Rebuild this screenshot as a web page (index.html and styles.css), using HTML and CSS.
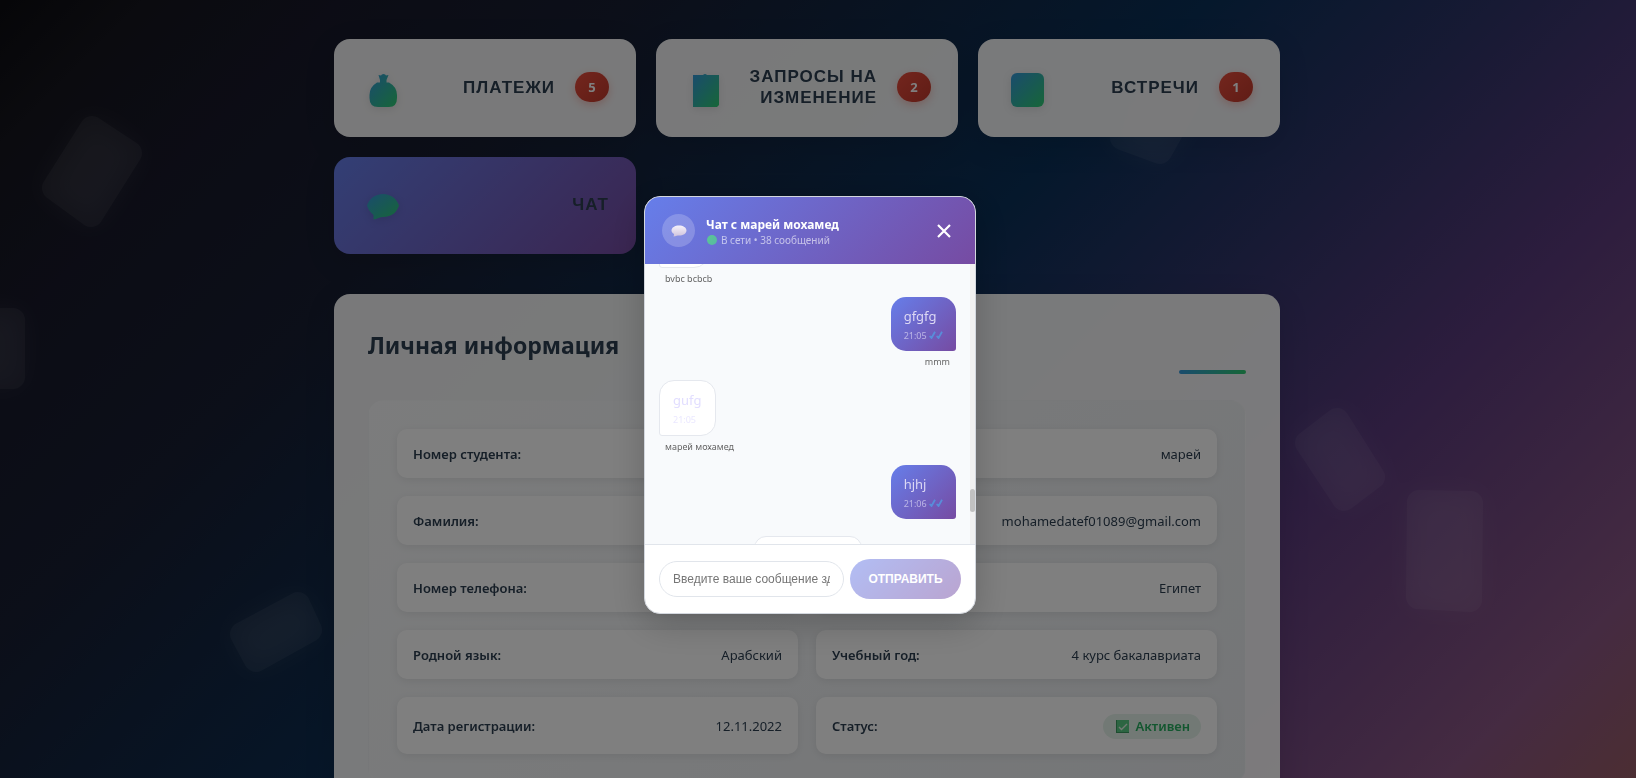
FILE: index.html
```html
<!DOCTYPE html>
<html lang="ru">

<head>
  <meta charset="UTF-8">
  <meta name="viewport" content="width=device-width, initial-scale=1.0">
  <title>Личный кабинет</title>
  <link rel="stylesheet" href="styles.css">
</head>

<body>
  <svg class="shapes" viewBox="0 0 1636 778" preserveAspectRatio="xMidYMid slice" aria-hidden="true">
    <defs>
      <filter id="glow" x="-50%" y="-50%" width="200%" height="200%">
        <feGaussianBlur stdDeviation="14" />
      </filter>
      <g id="cubes">
        <path d="M92 128 130 153 91 215 54 188z" />
        <path d="M-60 320H13V377H-60z" />
        <path d="M298 604 310 630 256 660 242 634z" />
        <path d="M1337 420 1373 477 1344 499 1307 443z" />
        <path d="M1419 502 1471 503 1470 600 1418 597z" />
        <path d="M1130 72 1188 102 1160 152 1122 138z" />
      </g>
    </defs>
    <use class="shapes-glow" href="#cubes" filter="url(#glow)" />
    <use class="shapes-body" href="#cubes" />
  </svg>

  <svg class="defs" aria-hidden="true">
    <linearGradient id="brand" x1="0" y1="0" x2="1" y2="1">
      <stop offset="0" stop-color="#3498db" />
      <stop offset="1" stop-color="#2ecc71" />
    </linearGradient>
  </svg>

  <div class="page">
    <nav class="tabs">
      <a class="tab" href="#payments">
        <svg class="tab-icon" viewBox="0 0 34 34">
          <path fill="url(#brand)" d="M11.500 2 14 2.500Q14.500 1 16.500 1T19 2.500L21.500 2 19.500 7V9.500H22Q30 14 30 22V25Q30 34 22 34H11Q2.500 34 2.500 25V22Q2.500 14 10 9.500H13V7z" />
        </svg>
        <span class="tab-title">ПЛАТЕЖИ</span>
        <span class="tab-badge">5</span>
      </a>
      <a class="tab" href="#requests">
        <svg class="tab-icon" viewBox="0 0 34 34">
          <path fill="url(#brand)" d="M4 2H14Q16 0 18 2H30V32L28 34H4z" />
        </svg>
        <span class="tab-title">ЗАПРОСЫ НА ИЗМЕНЕНИЕ</span>
        <span class="tab-badge">2</span>
      </a>
      <a class="tab" href="#meetings">
        <svg class="tab-icon" viewBox="0 0 34 34">
          <rect fill="url(#brand)" width="33" height="34" rx="6" />
        </svg>
        <span class="tab-title">ВСТРЕЧИ</span>
        <span class="tab-badge">1</span>
      </a>
      <a class="tab tab-chat" href="#chat">
        <svg class="tab-icon" viewBox="0 0 34 34">
          <path fill="url(#brand)" d="M16 3C24 3 30 8 32 14.500 30 21 25 26 16 26 13 26 10 28 6.500 28.500V24C3 21 1 18 0 14.500 2 8 8 3 16 3z" />
        </svg>
        <span class="tab-title">ЧАТ</span>
      </a>
    </nav>

    <section class="profile">
      <h2 class="profile-title">Личная информация</h2>
      <dl class="info">
        <div class="info-row">
          <dt>Номер студента:</dt>
          <dd></dd>
        </div>
        <div class="info-row">
          <dt></dt>
          <dd>марей</dd>
        </div>
        <div class="info-row">
          <dt>Фамилия:</dt>
          <dd></dd>
        </div>
        <div class="info-row">
          <dt></dt>
          <dd>mohamedatef01089@gmail.com</dd>
        </div>
        <div class="info-row">
          <dt>Номер телефона:</dt>
          <dd></dd>
        </div>
        <div class="info-row">
          <dt></dt>
          <dd>Египет</dd>
        </div>
        <div class="info-row">
          <dt>Родной язык:</dt>
          <dd>Арабский</dd>
        </div>
        <div class="info-row">
          <dt>Учебный год:</dt>
          <dd>4 курс бакалавриата</dd>
        </div>
        <div class="info-row">
          <dt>Дата регистрации:</dt>
          <dd>12.11.2022</dd>
        </div>
        <div class="info-row">
          <dt>Статус:</dt>
          <dd class="status">
            <svg class="status-icon" viewBox="0 0 13 13">
              <rect width="13" height="13" fill="#59cb84" />
              <path d="M0 0H1V12H13V13H0z" fill="#3a9a60" />
              <path d="M3 7 5.500 9.500 11 4" fill="none" stroke="#e4f5e8" stroke-width="1.400" />
            </svg>
            Активен
          </dd>
        </div>
      </dl>
    </section>
  </div>

  <div class="overlay">
    <div class="chat" role="dialog" aria-labelledby="chat-title">
      <header class="chat-header">
        <span class="chat-avatar">
          <svg viewBox="0 0 16 12">
            <defs>
              <linearGradient id="bubble" x1="0" y1="0" x2="0" y2="1">
                <stop offset="0" stop-color="#f6f2fb" />
                <stop offset="1" stop-color="#cfc3dc" />
              </linearGradient>
            </defs>
            <path fill="url(#bubble)" d="M8 .5C12 .5 15.500 2.500 15.500 5.500S12 10.500 8 10.500C6.500 10.500 5 11 2.500 11.500 3 10.500 3 9.500 3 9 1.500 8 .5 7 .5 5.500 .5 2.500 4 .5 8 .5z" />
          </svg>
        </span>
        <div class="chat-heading">
          <h3 class="chat-title" id="chat-title">Чат с марей мохамед</h3>
          <p class="chat-status"><span class="chat-dot"></span>В сети • 38 сообщений</p>
        </div>
        <button class="chat-close" type="button" aria-label="Закрыть">
          <svg viewBox="0 0 14 14">
            <path d="M1 1 13 13M13 1 1 13" stroke="#fff" stroke-width="2.200" />
          </svg>
        </button>
      </header>

      <div class="chat-body">
        <div class="messages">
          <div class="message">
            <div class="bubble bubble-empty"></div>
            <span class="sender">bvbc bcbcb</span>
          </div>
          <div class="message message-own">
            <div class="bubble">gfgfg
              <time>21:05 <svg class="ticks" viewBox="0 0 14 8"><path d="M.7 5 2.500 7 6 .8M7.700 5 9.500 7 13 .8" /></svg></time>
            </div>
            <span class="sender">mmm</span>
          </div>
          <div class="message">
            <div class="bubble">gufg
              <time>21:05</time>
            </div>
            <span class="sender">марей мохамед</span>
          </div>
          <div class="message message-own">
            <div class="bubble">hjhj
              <time>21:06 <svg class="ticks" viewBox="0 0 14 8"><path d="M.7 5 2.500 7 6 .8M7.700 5 9.500 7 13 .8" /></svg></time>
            </div>
          </div>
          <div class="message-system"></div>
        </div>
        <div class="scrollbar"><span class="scrollbar-thumb"></span></div>
      </div>

      <form class="chat-form">
        <input class="chat-input" type="text" aria-label="Сообщение" placeholder="Введите ваше сообщение здесь...">
        <button class="chat-send" type="submit" disabled>ОТПРАВИТЬ</button>
      </form>
    </div>
  </div>
</body>

</html>
```
FILE: styles.css
```css
* {
  box-sizing: border-box;
  margin: 0;
  padding: 0;
}

body {
  height: 100vh;
  overflow: hidden;
  font-family: "Noto Sans", sans-serif;
  font-size: 13px;
  line-height: 17px;
  color: #2c3e50;
  background: linear-gradient(135deg, #0c0c10 0%, #16161e 6%, #18192a 14%, #181e32 26%, #0a3058 50%, #2e3468 62%, #5a3a7c 75%, #8a5684 92%, #985c66 100%);
}

.shapes {
  position: fixed;
  inset: 0;
  width: 100%;
  height: 100%;
}

.shapes path {
  fill: #fff;
  stroke: #fff;
  stroke-width: 24px;
  stroke-linejoin: round;
}

.shapes-glow {
  opacity: 0.05;
}

.shapes-body {
  opacity: 0.05;
}

.defs {
  position: absolute;
  width: 0;
  height: 0;
}

/* page */

.page {
  position: relative;
  height: 100vh;
  overflow: hidden;
  padding: 39px 22px 0 0;
}

.tabs,
.profile {
  max-width: 946px;
  margin: 0 auto;
}

.tabs {
  display: grid;
  grid-template-columns: repeat(3, 1fr);
  gap: 20px;
}

.tab {
  display: flex;
  align-items: center;
  gap: 20px;
  min-height: 98px;
  padding: 26px 27px 28px;
  color: #2c3e50;
  text-decoration: none;
  background: rgba(255, 255, 255, 0.95);
  border-radius: 16px;
  box-shadow: 0 8px 32px rgba(0, 0, 0, 0.1);
}

.tab-chat {
  min-height: 97px;
  background: linear-gradient(135deg, #667eea 0%, #764ba2 100%);
}

.tab-icon {
  flex: none;
  width: 34px;
  height: 40px;
  margin-left: 6px;
  padding-top: 6px;
  filter: drop-shadow(0 2px 4px rgba(0, 0, 0, 0.1));
}

.tab-title {
  flex: 1;
  font-family: "Liberation Sans", Arial, sans-serif;
  font-size: 17px;
  font-weight: 700;
  line-height: 21px;
  letter-spacing: 1px;
  text-align: right;
}

.tab-badge {
  min-width: 34px;
  height: 30px;
  font-weight: 700;
  line-height: 30px;
  text-align: center;
  color: #fff;
  background: linear-gradient(135deg, #e74c3c, #c0392b);
  border-radius: 15px;
  box-shadow: 0 3px 8px rgba(231, 76, 60, 0.3);
}

.profile {
  margin-top: 40px;
  padding: 34px;
  background: rgba(255, 255, 255, 0.95);
  border-radius: 16px;
  box-shadow: 0 8px 32px rgba(0, 0, 0, 0.1);
}

.profile-title {
  font-size: 23px;
  line-height: 34px;
}

.profile-title::after {
  content: "";
  display: block;
  width: 67px;
  height: 4px;
  margin: 8px 0 26px auto;
  background: linear-gradient(90deg, #3498db, #2ecc71);
  border-radius: 2px;
}

.info {
  display: grid;
  grid-template-columns: 1fr 1fr;
  gap: 18px;
  padding: 28px;
  border: 1px solid rgba(255, 255, 255, 0.2);
  border-radius: 16px;
  background: linear-gradient(135deg, #f8f9fa, #e9ecef);
}

.info-row {
  display: flex;
  align-items: center;
  justify-content: space-between;
  padding: 17px 16px 15px;
  background: #fff;
  border-radius: 10px;
  box-shadow: 0 2px 9px rgba(0, 0, 0, 0.08);
}

.info-row dt {
  font-weight: 600;
}

.info-row .status {
  display: flex;
  align-items: center;
  gap: 6px;
  padding: 4px 11px 4px 13px;
  font-weight: 600;
  color: #27ae60;
  background: #e5f3ea;
  border-radius: 13px;
}

.status-icon {
  width: 13px;
  height: 13px;
}

/* chat */

.overlay {
  position: fixed;
  inset: 0;
  display: flex;
  align-items: center;
  justify-content: center;
  padding: 32px 16px 0 0;
  background: rgba(0, 0, 0, 0.5);
}

.chat {
  width: 332px;
  overflow: hidden;
  background: #fff;
  border: 1px solid #d3d7de;
  border-radius: 16px;
  box-shadow: 0 10px 36px rgba(0, 0, 0, 0.2);
}

.chat-header {
  display: flex;
  align-items: center;
  gap: 11px;
  height: 67px;
  padding: 0 24px 0 17px;
  color: #fff;
  background: linear-gradient(135deg, #667eea 0%, #764ba2 100%);
}

.chat-avatar {
  display: flex;
  align-items: center;
  justify-content: center;
  width: 33px;
  height: 33px;
  background: rgba(255, 255, 255, 0.2);
  border-radius: 50%;
}

.chat-avatar svg {
  width: 16px;
  height: 12px;
}

.chat-heading {
  flex: 1;
  padding-top: 2px;
}

.chat-title {
  font-size: 12px;
  line-height: 16px;
}

.chat-status {
  display: flex;
  align-items: center;
  gap: 4px;
  font-size: 10px;
  line-height: 14px;
  color: rgba(255, 255, 255, 0.6);
}

.chat-dot {
  width: 10px;
  height: 10px;
  margin-left: 1px;
  background: linear-gradient(135deg, #5cc795, #57b9a2);
  border-radius: 50%;
}

.chat-close {
  width: 14px;
  height: 14px;
  background: none;
  border: none;
  cursor: pointer;
}

.chat-close svg {
  display: block;
}

.chat-body {
  display: flex;
  height: 280px;
  overflow: hidden;
  background: #f8fafc;
}

/* list is scrolled, so its first bubble is cut by the header */
.messages {
  flex: 1;
  display: flex;
  flex-direction: column;
  gap: 12px;
  height: max-content;
  margin-top: -52px;
  padding: 0 14px;
}

.message {
  display: flex;
  flex-direction: column;
  align-items: flex-start;
}

.bubble {
  margin-bottom: 5px;
  padding: 10px 13px 8px;
  color: #e2deff;
  line-height: 19px;
  background: #fff;
  border: 1px solid #e5e8ee;
  border-radius: 15px 15px 15px 3px;
}

.bubble-empty {
  width: 50px;
  height: 56px;
}

.bubble time {
  display: block;
  margin-top: 3px;
  font-size: 9px;
  line-height: 14px;
  opacity: 0.7;
}

.message-own {
  align-items: flex-end;
}

.message-own .bubble {
  color: #dcd8f4;
  background: linear-gradient(135deg, #667eea 0%, #764ba2 100%);
  border: none;
  border-radius: 15px 15px 3px 15px;
}

.ticks {
  width: 14px;
  height: 8px;
  fill: none;
  stroke: #4fa3e8;
  stroke-width: 1.8px;
}

.sender {
  padding: 0 6px;
  font-size: 9px;
  line-height: 12px;
  color: #666;
}

.message-system {
  align-self: center;
  width: 108px;
  height: 30px;
  background: #fff;
  border: 1px solid #e5e8ee;
  border-radius: 12px;
}

.scrollbar {
  width: 5px;
  padding-top: 225px;
  background: #f1f1f1;
}

.scrollbar-thumb {
  display: block;
  height: 23px;
  background: #c1c1c1;
  border-radius: 3px;
}

.chat-form {
  display: flex;
  align-items: center;
  gap: 6px;
  padding: 14px;
  border-top: 1px solid #e1e5eb;
}

.chat-input {
  flex: 1;
  min-width: 0;
  height: 36px;
  padding: 0 13px;
  font-family: "Liberation Sans", Arial, sans-serif;
  font-size: 12px;
  background: #fff;
  border: 1px solid #e1e5eb;
  border-radius: 18px;
}

.chat-send {
  width: 111px;
  height: 40px;
  font-family: "Liberation Sans", Arial, sans-serif;
  font-size: 12px;
  font-weight: 700;
  color: #fff;
  background: linear-gradient(135deg, #667eea 0%, #764ba2 100%);
  border: none;
  border-radius: 20px;
  opacity: 0.5;
}
```
